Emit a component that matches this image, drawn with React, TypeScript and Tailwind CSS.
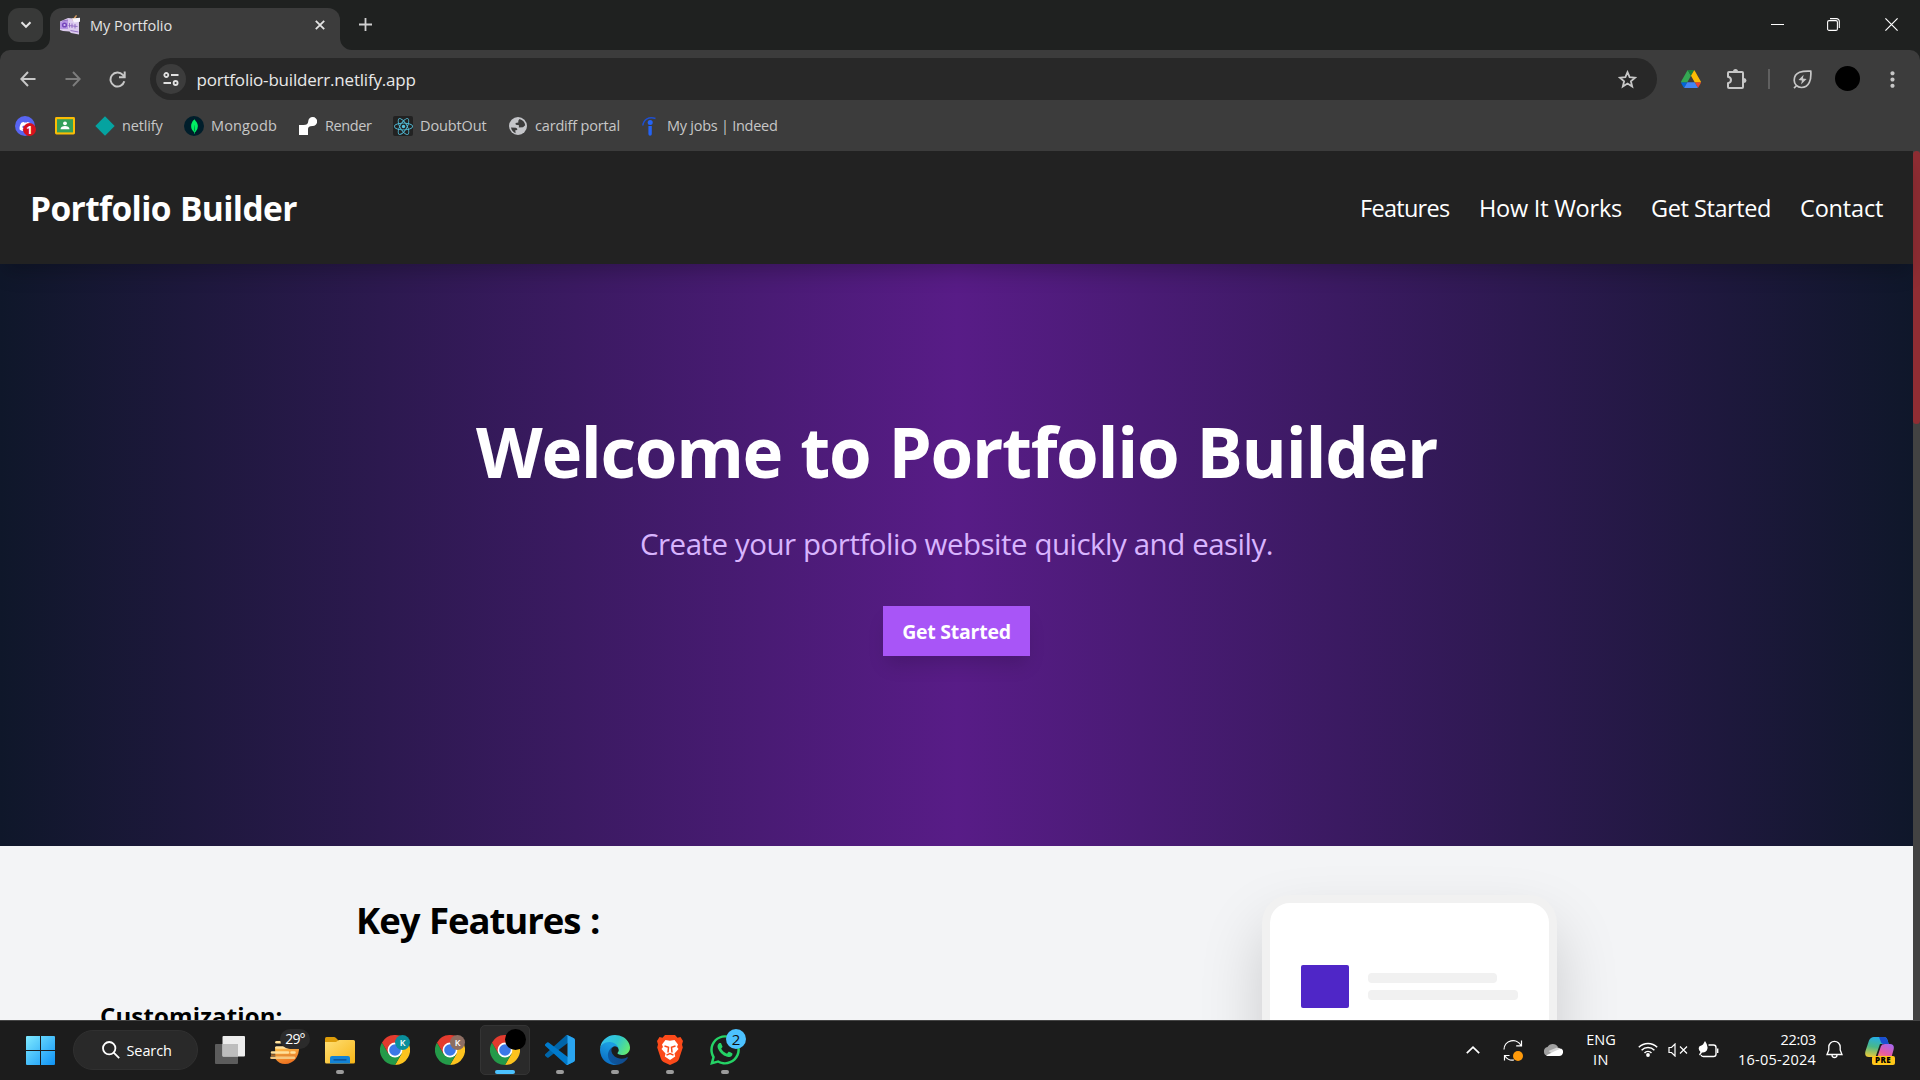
import React from 'react';
import { FaDiscord, FaReact, FaWhatsapp } from 'react-icons/fa';
import { SiMongodb } from 'react-icons/si';
import { MdMoreVert } from 'react-icons/md';

function PortfolioFavicon() {
  return (
    <svg width="20" height="20" viewBox="0 0 20 20">
      <path d="M0 6.500 8 3l11 1v15.500l-8-1.500-1.500-1.500-6.500-.5L0 15z" fill="#dccbee" />
      <path d="M0 7 8 5v9L0 14z" fill="#b796e4" />
      <circle cx="4.500" cy="10" r="2.600" fill="#7446bb" />
      <circle cx="4.500" cy="10" r="1.100" fill="#d7c3f2" />
      <path d="M9.500 8v4.500M12 8.500v4.500M15 9v4.500M8.500 10.500l9 1M10.500 15.500l8 1.500M2 6l6-1" stroke="#8d68c0" strokeWidth="0.900" />
      <path d="m12 5 4-5 1 .8-3 5z" fill="#d89c60" />
      <path d="m12 3.500 8-.8v4l-6 .8z" fill="#f8f4fc" />
    </svg>
  );
}

function ClassroomIcon() {
  return (
    <svg width="20" height="20" viewBox="0 0 20 20">
      <rect y="1" width="20" height="17.500" rx="1.400" fill="#fbbc04" />
      <rect x="2" y="3.200" width="16" height="13.200" fill="#34a05a" />
      <circle cx="10" cy="7.300" r="1.900" fill="#fff" />
      <path d="M5.500 13.200c0-2.200 2.200-3.200 4.500-3.200s4.500 1 4.500 3.200z" fill="#fff" />
    </svg>
  );
}

function DriveIcon() {
  return (
    <svg width="20" height="18" viewBox="0 0 87.3 78">
      <path d="m6.600 66.850 3.850 6.650c.8 1.400 1.950 2.500 3.300 3.300L27.500 53H0c0 1.550.4 3.100 1.200 4.500z" fill="#0066da" />
      <path d="M43.650 25 29.900 1.200c-1.350.8-2.500 1.900-3.300 3.300L1.200 48.500C.4 49.900 0 51.450 0 53h27.500z" fill="#34a853" />
      <path d="M73.550 76.800c1.350-.8 2.500-1.900 3.300-3.300l1.600-2.750L86.100 57.500c.8-1.400 1.200-2.950 1.200-4.500H59.800l5.850 11.500z" fill="#ea4335" />
      <path d="M43.650 25 57.400 1.200C56.050.4 54.500 0 52.900 0H34.400c-1.600 0-3.150.45-4.500 1.200z" fill="#188038" />
      <path d="M59.800 53H27.500L13.750 76.800c1.350.8 2.900 1.200 4.500 1.200h50.800c1.600 0 3.150-.45 4.500-1.200z" fill="#4285f4" />
      <path d="M73.400 26.500 60.700 4.500c-.8-1.400-1.950-2.500-3.300-3.300L43.650 25 59.800 53h27.450c0-1.550-.4-3.100-1.200-4.500z" fill="#fbbc04" />
    </svg>
  );
}

function ExtensionsIcon() {
  return (
    <svg width="21" height="21" viewBox="0 0 21 21">
      <path d="M3 3h13q1 0 1 1v14q0 1-1 1H3q-1 0-1-1v-3.800q3-.7 3-3.200T2 7.800V4q0-1 1-1z" fill="none" stroke="#c7c7c7" strokeWidth="2" />
      <path d="M7 2.500a2.500 2.500 0 0 1 5 0zM18 9a2.500 2.500 0 0 1 0 5z" fill="#c7c7c7" />
    </svg>
  );
}

function GlobeIcon() {
  return (
    <svg width="18" height="18" viewBox="0 0 18 18">
      <circle cx="9" cy="9" r="9" fill="#c4c5c9" />
      <path d="M2 10.500 6.800 10.800q1.700.3 1.500 2.200l-2 .3.300 3Q2.800 14.800 2 10.500zM10.500 2q5 1.300 5.700 6.300l-2.200 2-4.200.2L10 8.200 6.800 7.800 6.500 6l2.800-.5V3.800z" fill="#3c3c3c" />
    </svg>
  );
}

function Chrome() {
  return (
    <svg width="30" height="30" viewBox="0 0 30 30">
      <path d="M15 7.500h13A15 15 0 0 1 15 30l6.500-11.250z" fill="#fcc31e" />
      <path d="M2 7.500A15 15 0 0 0 15 30l6.500-11.250h-13z" fill="#249a49" />
      <path d="M2 7.500A15 15 0 0 1 28 7.500H15l-6.500 11.250z" fill="#e33b2e" />
      <circle cx="15" cy="15" r="7.400" fill="#fff" />
      <circle cx="15" cy="15" r="5.800" fill="#3b78e7" />
    </svg>
  );
}

function VsCode() {
  return (
    <svg width="30" height="30" viewBox="0 0 100 100">
      <path d="M96.500 10.800 75.900.9a6.200 6.200 0 0 0-7.100 1.200L1.300 63.600a4.200 4.200 0 0 0 0 6.200l5.500 5a4.200 4.200 0 0 0 5.300.2l81.200-61.600c2.700-2 6.700-.1 6.700 3.300v-.2a6.300 6.300 0 0 0-3.500-5.700z" fill="#0065a9" />
      <path d="m96.500 89.200-20.600 9.900a6.200 6.200 0 0 1-7.100-1.200L1.300 36.400a4.200 4.200 0 0 1 0-6.200l5.500-5a4.200 4.200 0 0 1 5.300-.2l81.200 61.600c2.700 2 6.700.1 6.700-3.300v.2a6.300 6.300 0 0 1-3.500 5.700z" fill="#007acc" />
      <path d="M75.900 99.100a6.200 6.200 0 0 1-7.100-1.200c2.300 2.300 6.200.7 6.200-2.600V4.700c0-3.300-3.900-4.900-6.200-2.600A6.200 6.200 0 0 1 75.900.9l20.600 9.900a6.300 6.300 0 0 1 3.500 5.600v67.200a6.300 6.300 0 0 1-3.500 5.600z" fill="#2aa5f0" />
    </svg>
  );
}

function Edge() {
  return (
    <svg width="30" height="30" viewBox="0 0 256 256">
      <defs>
        <linearGradient id="edgeA" x1="0" x2="1"><stop stopColor="#0c59a4" /><stop offset="1" stopColor="#114a8b" /></linearGradient>
        <linearGradient id="edgeB" x1="0.600" y1="0.200" x2="0.300" y2="1"><stop stopColor="#1b9de2" /><stop offset="1" stopColor="#0a6ac2" /></linearGradient>
        <linearGradient id="edgeC" x1="0" y1="0.300" x2="1" y2="0.700"><stop stopColor="#35c1f1" /><stop offset="0.500" stopColor="#2fc6cd" /><stop offset="1" stopColor="#66eb6e" /></linearGradient>
      </defs>
      <path d="M231 190.500c-3.400 1.800-6.900 3.400-10.500 4.700a101 101 0 0 1-35.600 6.400c-47 0-87.900-32.300-87.900-73.800a31.500 31.500 0 0 1 16.400-27.300c-42.500 1.800-53.400 46.100-53.400 72 0 73.400 67.600 80.800 82.200 80.800 7.900 0 19.700-2.300 26.900-4.600l1.300-.4a128 128 0 0 0 66.600-52.800 4 4 0 0 0-6-5z" fill="url(#edgeA)" />
      <path d="M105.700 241.400a79 79 0 0 1-22.700-21.300 80.700 80.700 0 0 1 29.500-120c3.200-1.500 8.500-4.100 15.600-4a32.400 32.400 0 0 1 25.700 13 32 32 0 0 1 6.300 18.700c0-.2 24.500-79.600-80-79.600-43.900 0-80 41.700-80 78.200a130 130 0 0 0 12.100 56 128 128 0 0 0 156.400 67.100 75.500 75.500 0 0 1-62.800-8z" fill="url(#edgeB)" />
      <path d="M152.300 148.900c-.9 1-3.400 2.500-3.400 5.600 0 2.600 1.700 5.200 4.800 7.300 14.400 10.100 41.700 8.700 41.800 8.700a59.500 59.500 0 0 0 30.300-8.300A61.400 61.400 0 0 0 256 109c.3-22.400-8-37.300-11.300-43.900C223.500 23.900 177.700 0 128 0A128 128 0 0 0 0 126.200c.5-36.500 36.800-66 80-66 3.500 0 23.500.3 42 10.100a72.600 72.600 0 0 1 30.900 29.300c6.100 10.600 7.200 24.100 7.200 29.500s-2.700 13.300-7.800 19.800z" fill="url(#edgeC)" />
    </svg>
  );
}

function Weather() {
  return (
    <svg width="32" height="26" viewBox="0 0 32 26">
      <defs><linearGradient id="sun" x1="0" y1="0" x2="0.400" y2="1"><stop stopColor="#ffc44d" /><stop offset="1" stopColor="#ee7320" /></linearGradient></defs>
      <path d="M6 8h24c.5 9-5 17-14 17-4 0-7.500-2-9.500-5z" fill="url(#sun)" />
      <g stroke="#ffe09a" strokeWidth="2.600" strokeLinecap="round">
        <path d="M7.500 3.300h4" />
        <path d="M7.500 8.500H18" />
        <path d="M3 13.500h16M22.500 13.500h3" />
        <path d="M2.500 18.700H25" stroke="#f5c880" />
      </g>
      <path d="M2 16.100h24" stroke="#e08a35" strokeWidth="1.200" />
    </svg>
  );
}

function Folder() {
  return (
    <svg width="30" height="28" viewBox="0 0 30 28">
      <defs><linearGradient id="folder" x1="0" y1="0" x2="1" y2="1"><stop stopColor="#ffdf75" /><stop offset="1" stopColor="#f7b516" /></linearGradient></defs>
      <path d="M0 2.500Q0 1 1.500 1H9q1 0 2 1l3 3v7H0z" fill="#dd9c09" />
      <path d="M0 6h11l3-2h14.500Q30 4 30 5.500V26q0 1.500-1.500 1.500h-27Q0 27.500 0 26z" fill="url(#folder)" />
      <path d="M5 27.500V22q0-2 2-2h16q2 0 2 2v5.500z" fill="#1283d6" />
      <path d="M9 23.800h12" stroke="#0a4a8c" strokeWidth="1.300" strokeLinecap="round" />
    </svg>
  );
}

function Copilot() {
  return (
    <svg width="29" height="23" viewBox="0 0 29 23">
      <defs>
        <linearGradient id="cpA" x1="0.500" y1="0" x2="0.300" y2="1"><stop stopColor="#24aee8" /><stop offset="0.500" stopColor="#49b889" /><stop offset="1" stopColor="#e8c93a" /></linearGradient>
        <linearGradient id="cpB" x1="0.800" y1="0" x2="0.300" y2="1"><stop stopColor="#a667ee" /><stop offset="0.600" stopColor="#e85aa2" /><stop offset="1" stopColor="#f98b66" /></linearGradient>
      </defs>
      <path d="M9 0h10q2.500 0 3.500 3l1.200 4h-6L11 20H4Q-1 20 .5 14L4 3.500Q5.500 0 9 0z" fill="url(#cpA)" />
      <path d="M14 0h5q2.500 0 3.500 3l1.200 4h-5q-2.500 0-3.200-3z" fill="#1b4fd1" />
      <path d="m17.500 7-5 14-2-1L15 7z" fill="#1c1c1c" />
      <path d="M20 7h5q5 0 3.500 6l-2 7q-1 3-4 3H13q-2 0-1-2l4-12Q17 7 20 7z" fill="url(#cpB)" />
    </svg>
  );
}

function TabStrip() {
  return (
    <div className="flex h-[50px] items-start bg-[#1f2120] text-[#e3e3e3]">
      <div className="mt-2 ml-2 flex h-[34px] w-[35px] items-center justify-center rounded-[11px] bg-[#383938]">
        <svg width="12" height="8" viewBox="0 0 12 8" fill="none" stroke="#e3e3e3" strokeWidth="2"><path d="m1.500 1.300 4.500 4.500 4.500-4.500" /></svg>
      </div>
      <div className="relative mt-2 ml-[7px] flex h-[42px] w-[290px] items-start rounded-t-[12px] bg-[#3c3c3c] pt-[7px] pl-[10px]">
        <svg className="absolute bottom-0 -left-3" width="12" height="12"><path d="M0 12A12 12 0 0 0 12 0v12z" fill="#3c3c3c" /></svg>
        <svg className="absolute -right-3 bottom-0" width="12" height="12"><path d="M0 0a12 12 0 0 0 12 12H0z" fill="#3c3c3c" /></svg>
        <PortfolioFavicon />
        <span className="ml-[10px] flex-1 text-[14.5px] leading-[21px]">My Portfolio</span>
        <svg className="mt-[5px] mr-[15px]" width="10" height="10" viewBox="0 0 10 10" stroke="#e3e3e3" strokeWidth="1.800"><path d="m.8.800 8.400 8.400M9.200.8.8 9.200" /></svg>
      </div>
      <svg className="mt-[18px] ml-[19px]" width="13" height="13" viewBox="0 0 13 13" stroke="#d0d0d0" strokeWidth="1.800"><path d="M6.500 0v13M0 6.500h13" /></svg>
      <div className="flex-1" />
      <div className="flex h-[49px] items-center">
        <div className="flex w-[56px] justify-center"><div className="h-px w-[13px] bg-white" /></div>
        <div className="flex w-[57px] justify-center">
          <svg width="13" height="13" viewBox="0 0 13 13" fill="none" stroke="#fff" strokeWidth="1.100"><rect x=".6" y="2.600" width="9.800" height="9.800" rx="1.500" /><path d="M3 .6h6.500a2.800 2.800 0 0 1 2.800 2.800V10" /></svg>
        </div>
        <div className="flex w-[58px] justify-center">
          <svg width="13" height="13" viewBox="0 0 13 13" stroke="#fff" strokeWidth="1.200"><path d="m.4.400 12.200 12.200M12.600.4.4 12.600" /></svg>
        </div>
      </div>
    </div>
  );
}

function Toolbar() {
  return (
    <div className="flex h-[58px] items-start rounded-t-[10px] bg-[#3c3c3c] pt-2 text-[#c7c7c7]">
      <div className="flex h-[42px] w-[150px] items-center pl-5">
        <svg width="16" height="16" viewBox="0 0 16 16" fill="none" stroke="#c7c7c7" strokeWidth="2"><path d="M15.500 8H1.500M8 1 1.300 8 8 15" /></svg>
        <svg className="ml-[29px]" width="16" height="16" viewBox="0 0 16 16" fill="none" stroke="#7d7d7d" strokeWidth="1.900"><path d="M.5 8h14M8 1l6.700 7L8 15" /></svg>
        <svg className="ml-[28px]" width="17" height="17" viewBox="0 0 17 17" fill="none" stroke="#c7c7c7" strokeWidth="2"><path d="M15.300 10.300A7 7 0 1 1 13.800 3.900L15.500 5.600M15.700.5v5.700H10" /></svg>
      </div>
      <div className="flex h-[42px] w-[1507px] items-center rounded-full bg-[#282828] pr-5">
        <div className="ml-[6px] flex h-[30px] w-[30px] items-center justify-center rounded-full bg-[#3c3c3c]">
          <svg width="16" height="14" viewBox="0 0 16 14" fill="none" stroke="#e0e0e0" strokeWidth="1.800"><circle cx="3.300" cy="3" r="2" /><path d="M8 3h7.500M.5 11H8" /><circle cx="12.600" cy="11" r="2" /></svg>
        </div>
        <span className="ml-[10.500px] flex-1 pt-[1px] text-[17px] leading-[42px] tracking-[-0.0116em] text-[#e8e8e8]">portfolio-builderr.netlify.app</span>
        <svg width="19" height="19" viewBox="0 0 19 19" fill="none" stroke="#c7c7c7" strokeWidth="1.800"><path d="m9.500 2.200 2.100 5 5.400.5-4.100 3.500 1.300 5.300-4.700-2.900-4.700 2.900 1.300-5.300L2 7.700l5.400-.5z" /></svg>
      </div>
      <div className="flex h-[42px] flex-1 items-center">
        <div className="ml-[23.500px] flex w-[20px]"><DriveIcon /></div>
        <div className="ml-[25.500px] flex"><ExtensionsIcon /></div>
        <div className="ml-[21px] h-5 w-[2px] bg-[#606060]" />
        <svg className="ml-[23px]" width="19" height="19" viewBox="0 0 19 19" fill="none" stroke="#c7c7c7" strokeWidth="1.700"><path d="M1 18.200 3.200 16M17.800 1.200C10 .8 1.200 1.600 1.200 10.200c0 4.200 3.200 7.300 7.200 7.300 8 0 10-8 9.400-16.300z" /><path d="M10.600 4.800 5.500 10l3.500.4-1 4.100L13.600 9l-3.700-.5z" fill="#c7c7c7" stroke="none" /></svg>
        <div className="mb-px ml-[23px] h-[25px] w-[25px] rounded-full bg-black" />
        <MdMoreVert className="ml-[20px] h-[25px] w-[25px]" />
      </div>
    </div>
  );
}

function Bookmark({ className, icon, label }: { className: string; icon: React.ReactNode; label?: string }) {
  return (
    <div className={`flex h-5 shrink-0 items-center whitespace-nowrap ${className}`}>
      <span className="flex h-5 w-5 shrink-0 items-center justify-center">{icon}</span>
      {label && <span className="ml-[7px] leading-5">{label}</span>}
    </div>
  );
}

function Bookmarks() {
  return (
    <div className="flex h-[43px] bg-[#3c3c3c] pt-[8px] pl-[15px] text-[14.5px] text-[#c7c7c7]">
      <Bookmark className="w-10" icon={
        <span className="relative flex h-5 w-5 items-center justify-center rounded-full bg-[#5865f2]">
          <FaDiscord className="h-[13px] w-[13px] text-white" />
          <span className="absolute -right-px bottom-0 flex h-[13px] w-[13px] items-center justify-center rounded-full bg-[#d8121c] text-[11px] leading-[13px] font-bold text-white">1</span>
        </span>
      } />
      <Bookmark className="w-10" icon={<ClassroomIcon />} />
      <Bookmark className="w-[89px] tracking-[-0.0104em]" label="netlify" icon={<svg width="20" height="20" viewBox="0 0 20 20"><path d="m10 .3 9.700 9.700-9.700 9.700L.3 10z" fill="#05a3a0" /></svg>} />
      <Bookmark className="w-[114px] tracking-[0.01em]" label="Mongodb" icon={<span className="flex h-5 w-5 items-center justify-center rounded-full bg-[#001e2b]"><SiMongodb className="h-[15px] w-[15px] text-[#00ed64]" /></span>} />
      <Bookmark className="w-[95px] tracking-[-0.0275em]" label="Render" icon={<svg width="18" height="18" viewBox="0 0 18 18" fill="#fff"><path d="M0 8h4.500v4H9v6H0zM9 8.500V12H4.500V8q4.500 0 4.700-3.500A4.500 4.500 0 1 1 13.500 9Q9 9 9 12z" /></svg>} />
      <Bookmark className="w-[115px] tracking-[-0.0083em]" label="DoubtOut" icon={<span className="flex h-5 w-5 items-center justify-center rounded-[2px] bg-[#222]"><FaReact className="h-[19px] w-[19px] text-[#53c1de]" /></span>} />
      <Bookmark className="w-[132px] tracking-[-0.0118em]" label="cardiff portal" icon={<GlobeIcon />} />
      <Bookmark className="w-[140px] tracking-[-0.0176em]" label="My jobs | Indeed" icon={
        <svg width="20" height="20" viewBox="0 0 20 20"><path d="M2.800 9.500C3.500 3.500 9 .2 15.500 2.500" fill="none" stroke="#1f4fd0" strokeWidth="1.500" /><circle cx="10.200" cy="6.500" r="2.500" fill="#2463f5" /><path d="M8.400 10h3.400v8q0 1.800-1.700 1.800T8.400 18z" fill="#2463f5" /></svg>
      } />
    </div>
  );
}

function Page() {
  return (
    <div className="flex h-[869px] overflow-hidden">
      <div className="flex w-[1913px] flex-col bg-[#f3f4f6]">
        <header className="z-10 flex h-[113px] shrink-0 items-center bg-[#222] pt-[2px] pr-[30px] pl-[30px] text-white shadow-[0_12px_19px_-4px_rgb(0_0_0/0.22)]">
          <h1 className="flex-1 text-[33.5px] font-bold tracking-[-0.0185em] [word-spacing:1px]">Portfolio Builder</h1>
          <nav className="flex text-[23.5px]">
            <a className="w-[119px] tracking-[-0.0302em]">Features</a>
            <a className="w-[172px] tracking-[-0.0101em]">How It Works</a>
            <a className="w-[149px] tracking-[-0.0181em]">Get Started</a>
            <a className="w-[83px] tracking-[-0.0074em]">Contact</a>
          </nav>
        </header>
        <section className="flex h-[582px] shrink-0 flex-col items-center bg-[linear-gradient(to_right,#0f172a,#581c87,#0f172a)] pt-[150px] whitespace-nowrap">
          <h2 className="text-[69px] leading-[75px] font-bold tracking-[-0.0190em] text-white [word-spacing:1.600px]">Welcome to Portfolio Builder</h2>
          <p className="mt-[32px] text-[29.5px] leading-[45px] tracking-[-0.0175em] text-[#d8b4fe] [word-spacing:0.300px]">Create your portfolio website quickly and easily.</p>
          <button className="mt-10 h-[50px] w-[147px] bg-[#a855f7] pt-[2px] text-[19.5px] font-bold tracking-[-0.0123em] text-white shadow-[0_12px_19px_-4px_rgb(0_0_0/0.15)]">Get Started</button>
        </section>
        <section className="flex h-[174px] shrink-0">
          <div className="w-[1262px] pt-[51px] pl-[100px]">
            <h3 className="ml-[256px] text-[36.5px] leading-[47px] font-bold tracking-[-0.0290em] text-black [word-spacing:1.200px]">Key Features :</h3>
            <h4 className="mt-[56px] text-[24px] leading-[31px] font-bold tracking-[0.006em] text-black">Customization:</h4>
          </div>
          <div className="mt-[48.500px] h-[590px] w-[295px] rounded-[28px] border-[8px] border-[#f1f1f1] bg-white pt-[62.500px] pl-[31px] shadow-[0_31px_62px_rgb(0_0_0/0.17)]">
            <div className="flex">
              <div className="h-[43px] w-[48px] rounded-[2px] bg-[#4f26c7]" />
              <div className="flex flex-col gap-[7px] pt-2 pl-[19px]">
                <div className="h-[10px] w-[129px] rounded-[4px] bg-[#f1f1f1]" />
                <div className="h-[10px] w-[150px] rounded-[4px] bg-[#f1f1f1]" />
              </div>
            </div>
          </div>
        </section>
      </div>
      <div className="w-[7px] bg-[#424242]"><div className="h-[273px] rounded-full bg-[#8f2d33]" /></div>
    </div>
  );
}

function TaskItem({ children, running, active }: { children: React.ReactNode; running?: boolean; active?: boolean }) {
  return (
    <div className="flex h-[59px] w-[55px] items-start justify-center pt-1">
      <div className={active ? 'relative flex h-[50px] w-[50px] items-center justify-center rounded-[5px] border border-[#343434] bg-[#2a2a2a]' : 'relative flex h-[50px] w-[50px] items-center justify-center'}>
        {children}
        {running && <span className="absolute bottom-[1px] h-1 w-2 rounded-full bg-[#9b9b9b]" />}
        {active && <span className="absolute bottom-0 h-1 w-5 rounded-full bg-[#4cc2ff]" />}
      </div>
    </div>
  );
}

function Taskbar() {
  return (
    <div className="flex h-[60px] items-center border-t border-[#454545] bg-[#1c1c1c] text-[14.5px] text-white">
      <svg className="ml-[26px]" width="29" height="29" viewBox="0 0 29 29">
        <defs><linearGradient id="win" x1="0" y1="0" x2="29" y2="29" gradientUnits="userSpaceOnUse"><stop stopColor="#7feaff" /><stop offset="1" stopColor="#0f93f5" /></linearGradient></defs>
        <path d="M1 0h13v14H0V1q0-1 1-1zM15 0h13q1 0 1 1v13H15zM0 15h14v14H1q-1 0-1-1zM15 15h14v13q0 1-1 1H15z" fill="url(#win)" />
      </svg>
      <div className="-mt-px ml-[18px] flex h-10 w-[125px] items-center rounded-full border border-[#303030] bg-[#292929] pl-[28px]">
        <svg width="18" height="18" viewBox="0 0 18 18" fill="none" stroke="#fff" strokeWidth="1.800"><circle cx="7.200" cy="7.200" r="6.200" /><path d="m11.700 11.700 5.500 5.500" /></svg>
        <span className="ml-[6.500px] pt-px leading-5 tracking-[-0.0072em]">Search</span>
      </div>
      <div className="ml-[4.500px] flex">
        <TaskItem>
          <svg width="30" height="28" viewBox="0 0 30 28"><rect y="8" width="23" height="20" rx="1" fill="#5c5c5c" /><rect x="7.500" width="22.500" height="20.500" rx="1" fill="#ededed" /><path d="M7.500 8H23v12.500H7.500z" fill="#bdbdbd" /></svg>
        </TaskItem>
        <TaskItem>
          <span className="mt-[3px]"><Weather /></span>
          <span className="absolute top-1 left-5 flex h-5 w-[30px] items-center justify-center rounded-full bg-[#2b2b2b] text-[14px] leading-5 tracking-[-0.06em]">29°</span>
        </TaskItem>
        <TaskItem running><Folder /></TaskItem>
        <TaskItem>
          <Chrome />
          <span className="absolute top-[10px] left-[25px] flex h-[15px] w-[15px] items-center justify-center rounded-full bg-[#0a8f9c] text-[9px] leading-none font-semibold">K</span>
        </TaskItem>
        <TaskItem>
          <Chrome />
          <span className="absolute top-[10px] left-[25px] flex h-[15px] w-[15px] items-center justify-center rounded-full bg-[#8d6e63] text-[9px] leading-none font-semibold">K</span>
        </TaskItem>
        <TaskItem active>
          <Chrome />
          <span className="absolute top-[3px] right-[3px] h-[21px] w-[21px] rounded-full bg-black" />
        </TaskItem>
        <TaskItem running><VsCode /></TaskItem>
        <TaskItem running><Edge /></TaskItem>
        <TaskItem running>
          <svg width="26" height="30" viewBox="0 0 26 30">
            <path d="M8 0h10l2.500 2.700L23.500 2 26 6l-1 3.500.8 3L22 24q-.7 2-2.500 3L13 30l-6.500-3Q4.700 26 4 24L.2 12.500l.8-3L0 6l2.500-4 3 .7z" fill="#fb4a1a" />
            <path d="M8.500 5 13 5.800 17.500 5 21 9.500l-1 2.500 1.500 2-4 4.500.7 3L13 25l-5.200-3.500.7-3-4-4.500L6 12 5 9.500z" fill="#fff" />
            <path d="m7.500 11 4 1.200-.5 5.300M18.500 11l-4 1.200.5 5.300M9.500 20.200 13 18.500l3.500 1.700" fill="none" stroke="#fb4a1a" strokeWidth="1.500" />
          </svg>
        </TaskItem>
        <TaskItem running>
          <FaWhatsapp className="h-[34px] w-[34px] text-[#25d366]" />
          <span className="absolute top-1 left-[26px] flex h-5 w-5 items-center justify-center rounded-full bg-[#4cc2ff] text-[15px] leading-5 text-[#101010]">2</span>
        </TaskItem>
      </div>
      <div className="flex-1" />
      <div className="-mt-[2px] flex w-10 justify-center"><svg width="14" height="8" viewBox="0 0 14 8" fill="none" stroke="#fff" strokeWidth="1.700"><path d="m.8 7.200 6.200-6 6.200 6" /></svg></div>
      <div className="-mt-px flex w-10 justify-center">
        <svg width="20" height="21" viewBox="0 0 20 21" fill="none" stroke="#fff" strokeWidth="1.200"><path d="M1 9.500A9 9 0 0 1 18 5.500M18.500.5v5.300h-5.300M1.500 20.500v-5h5M2 16a9 9 0 0 0 9 4" /><circle cx="15" cy="16" r="5" fill="#ff9a0b" stroke="none" /></svg>
      </div>
      <div className="-mt-[2px] flex w-10 justify-center">
        <svg width="20" height="13" viewBox="0 0 20 13"><path d="M4.500 12.800a4.500 4.500 0 0 1 0-8.800A6 6 0 0 1 15 4l-7 8.800z" fill="#a0a0a0" /><path d="M14 4.500q3 .2 4 2l-9 4-3.500-2.500z" fill="#d5d5d5" /><path d="M3 12.500 12 8l6-2.500A4 4 0 0 1 16 13H4.500z" fill="#fff" /></svg>
      </div>
      <div className="-mt-px w-14 text-center leading-5"><div>ENG</div><div className="tracking-[0.03em]">IN</div></div>
      <div className="-mt-[2px] flex w-[38px] justify-center">
        <svg width="20" height="15" viewBox="0 0 20 15" fill="none" stroke="#fff" strokeWidth="1.500"><path d="M.8 5.300a13 13 0 0 1 18.400 0M3.600 8.200a9 9 0 0 1 12.800 0M6.500 11a5 5 0 0 1 7 0" /><circle cx="10" cy="13" r="1.900" fill="#fff" stroke="none" /></svg>
      </div>
      <div className="-mt-[2px] flex w-[21px] justify-center">
        <svg width="20" height="14" viewBox="0 0 20 14" fill="none" stroke="#fff" strokeWidth="1.200"><path d="M1 4.500h2.500L7 1v12L3.500 9.500H1z" /><path d="m12 3.500 7 7M19 3.500l-7 7" /></svg>
      </div>
      <div className="-mt-[3px] flex w-10 justify-center">
        <svg width="21" height="17" viewBox="0 0 21 17" fill="none" stroke="#fff" strokeWidth="1.400"><path d="M10.500 4h5a2.500 2.500 0 0 1 2.500 2.500v6.500a2.500 2.500 0 0 1-2.500 2.500H6a3 3 0 0 1-3-1.500M19.700 7.500v4.500" /><path d="M7 0q4 5.500 1.800 9.500-1.800 2.500-4.800 2L2 14.500l-1-1L2.500 11Q-.5 8 1.500 5.200q2-.7 3.500-1.700z" fill="#fff" stroke="none" /></svg>
      </div>
      <div className="-mt-[2px] w-[88px] text-right leading-5"><div className="tracking-[-0.0204em]">22:03</div><div className="tracking-[0.0163em]">16-05-2024</div></div>
      <div className="-mt-[2px] flex w-[37px] justify-center">
        <svg width="17" height="19" viewBox="0 0 17 19" fill="none" stroke="#fff" strokeWidth="1.300"><path d="M1 14.500 2.800 10V7a5.700 5.700 0 0 1 11.400 0v3l1.800 4.500zM6 15a2.500 2.500 0 0 0 5 0" /></svg>
      </div>
      <div className="mr-[14px] flex w-[53px] justify-center">
        <div className="relative flex h-7 w-[29px]">
          <Copilot />
          <span className="absolute top-[19px] left-[6.500px] flex h-[9.500px] w-[23px] items-center justify-center rounded-[2px] bg-[#ffc619] text-[8px] leading-none font-extrabold tracking-[0.04em] text-black">PRE</span>
        </div>
      </div>
    </div>
  );
}

export default function App() {
  return (
    <div className="h-[1080px] w-[1920px] overflow-hidden bg-[#1f2120] font-['Open_Sans','Noto_Sans',sans-serif]">
      <TabStrip />
      <Toolbar />
      <Bookmarks />
      <Page />
      <Taskbar />
    </div>
  );
}
